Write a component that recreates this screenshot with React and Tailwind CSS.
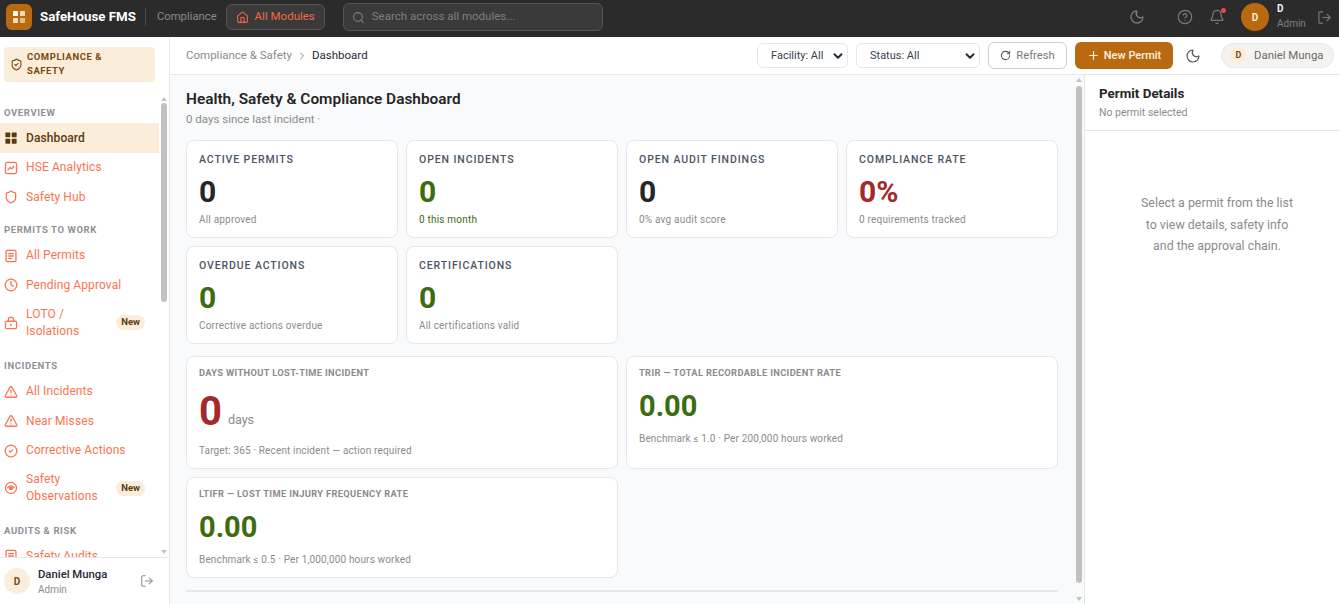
import React from "react";
import { Moon, CircleHelp, Bell, LogOut, House, Search, ShieldCheck, Shield, Clock, TriangleAlert, CircleCheck, ChevronRight, RotateCw, Plus, ChevronDown } from "lucide-react";

const Grid4 = ({ className }) => (
  <svg viewBox="0 0 16 16" className={className} fill="currentColor">
    <rect x="0.5" y="0.5" width="6.5" height="6.5" rx="1" />
    <rect x="9" y="0.5" width="6.5" height="6.5" rx="1" />
    <rect x="0.5" y="9" width="6.5" height="6.5" rx="1" />
    <rect x="9" y="9" width="6.5" height="6.5" rx="1" />
  </svg>
);
const Logo = () => (
  <svg viewBox="0 0 12 12" className="w-[12px] h-[12px]">
    <rect x="0" y="0" width="5" height="5" rx="0.6" fill="#ffffff" />
    <rect x="7" y="0" width="5" height="5" rx="0.6" fill="#f3dcbc" />
    <rect x="0" y="7" width="5" height="5" rx="0.6" fill="#f3dcbc" />
    <rect x="7" y="7" width="5" height="5" rx="0.6" fill="#e2bb88" />
  </svg>
);
const Stroke = ({ children }) => (
  <svg viewBox="0 0 24 24" className="w-[14px] h-[14px]" fill="none" stroke="currentColor" strokeWidth="2.2" strokeLinecap="round" strokeLinejoin="round">{children}</svg>
);
const ChartIcon = () => (
  <Stroke><rect x="2.5" y="2.5" width="19" height="19" rx="2.5" /><path d="M7 15l3.5-4 3 2.5L17 9" /></Stroke>
);
const DocIcon = () => (
  <Stroke><rect x="3.5" y="2.5" width="17" height="19" rx="2" /><path d="M8 8h8M8 12h8M8 16h5" /></Stroke>
);
const LockIcon = () => (
  <Stroke><rect x="2.5" y="9" width="19" height="12.5" rx="2" /><path d="M7.5 9V6.5a4.5 4.5 0 0 1 9 0V9" /><path d="M12 14v2.5" /></Stroke>
);
const ObsIcon = () => (
  <Stroke><circle cx="12" cy="12" r="9.5" /><path d="M6.5 11.5c3-4 8-4 11 0" /><circle cx="12" cy="12.5" r="2.4" fill="currentColor" /></Stroke>
);
const ic = "w-[14px] h-[14px]";
const Alert = () => <TriangleAlert className={ic} strokeWidth={2.2} />;

const Item = ({ icon, label, badge, active, two }) => (
  <div className={`flex items-center gap-2 pl-1 pr-[14px] ${two ? "pt-[6px] pb-[8px]" : "h-[30px] mb-[-0.5px]"} ${active ? "bg-[#faedda] text-[#5c3a0e] font-medium" : "text-[#fb7452]"}`}>
    <span className="w-[14px] shrink-0 flex justify-center">{icon}</span>
    <span className="flex-1 text-[12px] leading-[17px] tracking-[0.1px]">{label}</span>
    {badge && <span className="rounded-full bg-[#faedda] text-[#5c3a0e] text-[9.5px] font-bold px-[5px] h-[15px] flex items-center">{badge}</span>}
  </div>
);
const Section = ({ children, mt = "mt-[12px]" }) => (
  <div className={`pl-1 text-[9.5px] font-bold tracking-[0.6px] text-[#8f9095] h-[14px] flex items-center mb-[3px] ${mt}`}>{children}</div>
);

const Kpi = ({ label, value, sub, color = "text-[#262626]", subColor = "text-[#8b8b8b]" }) => (
  <div className="h-[98px] bg-white border border-[#e5e7eb] rounded-lg px-3 pt-[12px]">
    <div className="text-[10.5px] font-medium tracking-[0.9px] text-[#4b5563] leading-[14px]">{label}</div>
    <div className={`text-[30px] font-bold leading-[36px] mt-[7px] ${color}`}>{value}</div>
    <div className={`text-[10px] leading-[14px] mt-[3px] tracking-[0.2px] ${subColor}`}>{sub}</div>
  </div>
);
const Metric = ({ label, value, sub, unit, color, big, h }) => (
  <div className={`${h} bg-white border border-[#e5e7eb] rounded-lg px-3 pt-[9px]`}>
    <div className="text-[9.3px] font-bold tracking-[0.35px] text-[#8b8b8b] leading-[13px]">{label}</div>
    <div className={`flex items-end gap-[6px] ${big ? "mt-[9px]" : "mt-[7px]"}`}>
      <span className={`${big ? "text-[40px] leading-[48px]" : "text-[29px] leading-[40px]"} font-bold ${color}`}>{value}</span>
      {unit && <span className="text-[12.5px] leading-[16px] pb-[8px] text-[#8b8b8b]">{unit}</span>}
    </div>
    <div className={`text-[10px] leading-[14px] tracking-[0.15px] text-[#8b8b8b] ${big ? "mt-[8px]" : "mt-[6px]"}`}>{sub}</div>
  </div>
);
const Select = ({ w, label }) => (
  <div className={`${w} h-[25px] bg-white border border-[#e5e7eb] rounded-md flex items-center justify-between pl-[13px] pr-[2px] text-[11px] text-[#374151]`}>
    <span className="pt-[1px]">{label}</span>
    <ChevronDown className="w-[14px] h-[14px] text-[#1f2937]" strokeWidth={3.2} />
  </div>
);
const Scrollbar = ({ pos, thumb }) => (
  <div className={`absolute bottom-0 w-[10px] ${pos}`}>
    <div className="absolute top-[3px] left-[2px] w-0 h-0 border-x-[3px] border-x-transparent border-b-[4px] border-b-[#c4c4c4]" />
    <div className={`absolute left-[2px] w-[6px] rounded-full bg-[#c1c1c1] ${thumb}`} />
    <div className="absolute bottom-[3px] left-[2px] w-0 h-0 border-x-[3px] border-x-transparent border-t-[4px] border-t-[#c4c4c4]" />
  </div>
);

export default function App() {
  return (
    <div className="w-[1339px] h-[604px] overflow-hidden flex flex-col bg-white font-['Roboto',sans-serif]">
      <header className="h-[37px] shrink-0 bg-[#2b2b2b] flex items-center pl-[6px] pr-[7px] pb-[3px]">
        <div className="h-[26px] w-[26px] rounded-[6px] bg-[#b96a10] flex items-center justify-center">
          <Logo />
        </div>
        <span className="ml-2 text-[13.3px] font-bold text-white whitespace-nowrap">SafeHouse FMS</span>
        <span className="ml-[9px] w-px h-[18px] bg-[#4a4a4a]" />
        <span className="ml-[11px] text-[11.3px] text-[#8a8a8a]">Compliance</span>
        <div className="ml-[9px] h-[26px] w-[99px] rounded-md border border-[#555] bg-[#3a3a3a] flex items-center justify-center gap-[6px] text-[11.5px] text-[#ef6a45] whitespace-nowrap">
          <House className="w-[13px] h-[13px]" strokeWidth={2} />
          <span>All Modules</span>
        </div>
        <div className="ml-[18px] h-[28px] w-[260px] rounded-md border border-[#555] bg-[#3a3a3a] flex items-center pl-2 gap-[7px] text-[11.5px] text-[#7e7e7e]">
          <Search className="w-[13px] h-[13px]" strokeWidth={2} />
          <span>Search across all modules...</span>
        </div>
        <div className="flex-1" />
        <Moon className="w-[16px] h-[16px] text-[#7a7a7a]" strokeWidth={2} />
        <CircleHelp className="ml-[32px] w-[16px] h-[16px] text-[#7a7a7a]" strokeWidth={1.8} />
        <div className="relative ml-4 w-[16px] h-[16px]">
          <Bell className="w-[16px] h-[16px] text-[#7a7a7a]" strokeWidth={1.8} />
          <span className="absolute -top-[1px] right-[-1px] w-[5px] h-[5px] rounded-full bg-[#ef4444]" />
        </div>
        <div className="ml-4 w-[28px] h-[28px] rounded-full bg-[#b96a10] flex items-center justify-center text-[10px] font-bold text-[#faedda]">D</div>
        <div className="ml-2 w-[30px] flex flex-col">
          <span className="text-[10px] font-bold text-[#f0f0f0] leading-[14px]">D</span>
          <span className="text-[10px] text-[#7f7f7f] leading-[16px]">Admin</span>
        </div>
        <LogOut className="ml-[10px] w-[15px] h-[15px] text-[#7a7a7a]" strokeWidth={1.8} />
      </header>

      <div className="flex-1 flex min-h-0">
        <aside className="w-[170px] shrink-0 border-r border-[#e5e7eb] bg-white flex flex-col">
          <div className="h-[57px] shrink-0 pt-[10px] pl-1">
            <div className="h-[35px] w-[151px] rounded bg-[#faedda] flex items-center gap-1 pl-[6px] text-[#7a4a10]">
              <ShieldCheck className="w-[13px] h-[13px] shrink-0" strokeWidth={2} />
              <span className="w-[100px] pb-[1px] text-[9.5px] font-bold tracking-[0.55px] leading-[14px]">COMPLIANCE &amp; SAFETY</span>
            </div>
          </div>
          <div className="h-[463px] shrink-0 relative overflow-hidden">
            <div className="w-[159px] pt-[12px]">
              <Section mt="mt-0">OVERVIEW</Section>
              <Item active icon={<Grid4 className="w-[12px] h-[12px]" />} label="Dashboard" />
              <Item icon={<ChartIcon />} label="HSE Analytics" />
              <Item icon={<Shield className={ic} strokeWidth={2.2} />} label="Safety Hub" />
              <Section>PERMITS TO WORK</Section>
              <Item icon={<DocIcon />} label="All Permits" />
              <Item icon={<Clock className={ic} strokeWidth={2.2} />} label="Pending Approval" />
              <Item two icon={<LockIcon />} label="LOTO / Isolations" badge="New" />
              <Section>INCIDENTS</Section>
              <Item icon={<Alert />} label="All Incidents" />
              <Item icon={<Alert />} label="Near Misses" />
              <Item icon={<CircleCheck className={ic} strokeWidth={2.2} />} label="Corrective Actions" />
              <Item two icon={<ObsIcon />} label="Safety Observations" badge="New" />
              <Section mt="mt-[11px]">AUDITS &amp; RISK</Section>
              <Item icon={<DocIcon />} label="Safety Audits" />
            </div>
            <Scrollbar pos="left-[159px] top-0" thumb="top-[9px] h-[199px]" />
          </div>
          <div className="h-[47px] border-t border-[#e5e7eb] flex items-center pl-1">
            <div className="w-[26px] h-[26px] rounded-full bg-[#faedda] flex items-center justify-center text-[10px] font-bold text-[#7a4a10]">D</div>
            <div className="ml-2 mt-[2px] flex flex-col flex-1">
              <span className="text-[11.3px] font-medium text-[#1f2937] leading-[16px]">Daniel Munga</span>
              <span className="text-[10px] text-[#8b8b8b] leading-[14px]">Admin</span>
            </div>
            <LogOut className="mr-[15px] w-[14px] h-[14px] text-[#8b8b8b]" strokeWidth={1.8} />
          </div>
        </aside>

        <div className="flex-1 flex flex-col min-w-0">
          <div className="h-[38px] shrink-0 border-b border-[#e5e7eb] bg-white flex items-center pl-4 pr-[5px]">
            <span className="text-[11.5px] text-[#8b8b8b]">Compliance &amp; Safety</span>
            <ChevronRight className="mx-1 w-[12px] h-[12px] text-[#8b8b8b]" strokeWidth={2} />
            <span className="text-[11.5px] text-[#1f2937]">Dashboard</span>
            <div className="flex-1" />
            <Select w="w-[91px]" label="Facility: All" />
            <div className="w-2" />
            <Select w="w-[124px]" label="Status: All" />
            <div className="ml-2 w-[79px] h-[27px] rounded-md border border-[#cfcfcf] bg-white flex items-center justify-center gap-[5px] text-[11.2px] text-[#7a7a7a]">
              <RotateCw className="w-[11px] h-[11px] text-[#555]" strokeWidth={2.2} />
              <span className="pt-[1px]">Refresh</span>
            </div>
            <div className="ml-2 w-[98px] h-[27px] rounded-md bg-[#b96a10] flex items-center justify-center gap-[4px] text-[11px] font-medium text-[#fdf3e3]">
              <Plus className="w-[13px] h-[13px]" strokeWidth={2.2} />
              <span className="pt-[1px]">New Permit</span>
            </div>
            <Moon className="ml-3 w-[16px] h-[16px] text-[#555]" strokeWidth={1.8} />
            <div className="ml-5 w-[113px] h-[25px] rounded-full border border-[#e5e7eb] bg-[#f5f3ef] flex items-center pl-2 gap-[7px] text-[11.4px] text-[#6b6b6b]">
              <span className="w-[17px] h-[17px] rounded-full bg-[#faedda] flex items-center justify-center text-[9px] font-bold text-[#7a4a10]">D</span>
              <span>Daniel Munga</span>
            </div>
          </div>

          <div className="flex-1 flex min-h-0">
            <main className="relative w-[914px] shrink-0 bg-[#f9fafb] overflow-hidden pl-4 pt-[14px]">
              <h1 className="text-[15.4px] font-semibold text-[#262626] leading-[20px]">Health, Safety &amp; Compliance Dashboard</h1>
              <p className="mt-[2px] text-[11.5px] text-[#8b8b8b] leading-[16px]">0 days since last incident ·</p>
              <div className="w-[872px] mt-[13px] grid grid-cols-4 gap-2">
                <Kpi label="ACTIVE PERMITS" value="0" sub="All approved" />
                <Kpi label="OPEN INCIDENTS" value="0" sub="0 this month" color="text-[#3d6b0f]" subColor="text-[#3d6b0f]" />
                <Kpi label="OPEN AUDIT FINDINGS" value="0" sub="0% avg audit score" />
                <Kpi label="COMPLIANCE RATE" value="0%" sub="0 requirements tracked" color="text-[#a32a2a]" />
                <Kpi label="OVERDUE ACTIONS" value="0" sub="Corrective actions overdue" color="text-[#3d6b0f]" />
                <Kpi label="CERTIFICATIONS" value="0" sub="All certifications valid" color="text-[#3d6b0f]" />
              </div>
              <div className="w-[872px] mt-[12px] grid grid-cols-2 gap-2">
                <Metric h="h-[113px]" big label="DAYS WITHOUT LOST-TIME INCIDENT" value="0" unit="days" sub="Target: 365 · Recent incident — action required" color="text-[#a32a2a]" />
                <Metric h="h-[113px]" label="TRIR — TOTAL RECORDABLE INCIDENT RATE" value="0.00" sub="Benchmark ≤ 1.0 · Per 200,000 hours worked" color="text-[#3d6b0f]" />
                <Metric h="h-[101px]" label="LTIFR — LOST TIME INJURY FREQUENCY RATE" value="0.00" sub="Benchmark ≤ 0.5 · Per 1,000,000 hours worked" color="text-[#3d6b0f]" />
              </div>
              <div className="w-[872px] mt-[12px] h-[2px] bg-[#e5e7eb]" />
              <Scrollbar pos="left-[904px] top-0" thumb="top-[11px] h-[497px]" />
            </main>
            <section className="flex-1 border-l border-[#e5e7eb] bg-white">
              <div className="h-[56px] border-b border-[#e5e7eb] pl-[14px] pt-[10px]">
                <div className="text-[13.4px] font-bold text-[#262626] leading-[18px]">Permit Details</div>
                <div className="text-[10.5px] text-[#8b8b8b] leading-[14px] mt-[3px]">No permit selected</div>
              </div>
              <div className="pt-[61px] pl-[10px] text-center text-[12.4px] leading-[21.6px] text-[#8b8b8b]">
                <div>Select a permit from the list</div>
                <div>to view details, safety info</div>
                <div>and the approval chain.</div>
              </div>
            </section>
          </div>
        </div>
      </div>
    </div>
  );
}
